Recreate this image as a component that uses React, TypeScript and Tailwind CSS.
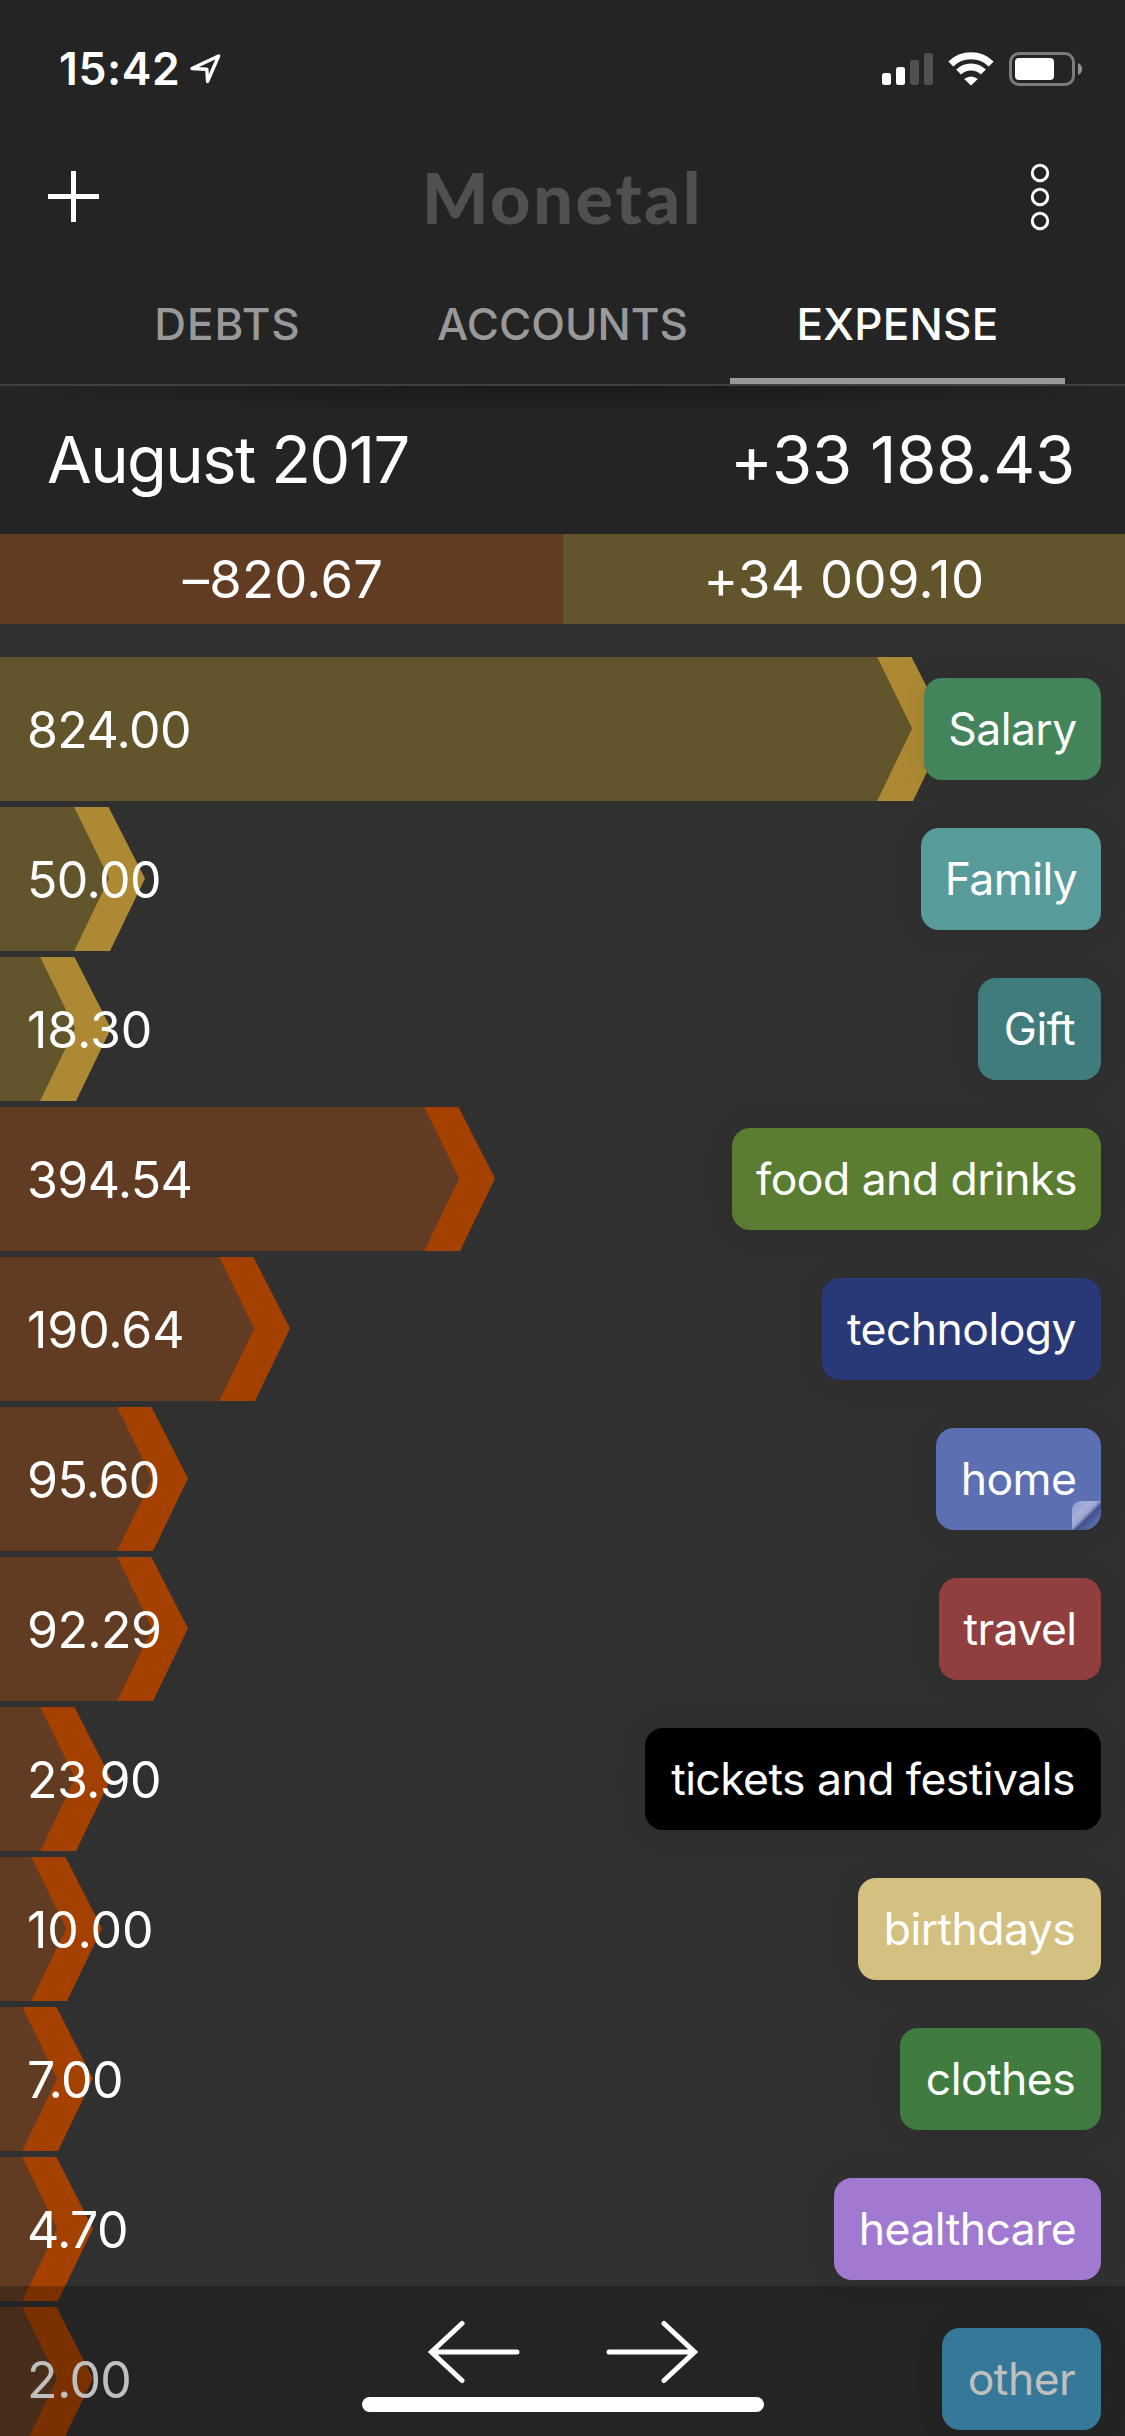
import clsx from "clsx";

type Row = {
  amount: string;
  label: string;
  bar: number;
  kind: "income" | "expense";
  tag: string;
  note?: boolean;
};

const rows: Row[] = [
  { amount: "824.00", label: "Salary", bar: 877, kind: "income", tag: "w-[177px] bg-[#43845b]" },
  { amount: "50.00", label: "Family", bar: 74, kind: "income", tag: "w-[180px] bg-[#589b9b]" },
  { amount: "18.30", label: "Gift", bar: 40, kind: "income", tag: "w-[123px] bg-[#407c7c]" },
  { amount: "394.54", label: "food and drinks", bar: 424, kind: "expense", tag: "w-[369px] bg-[#5b7d31]" },
  { amount: "190.64", label: "technology", bar: 219, kind: "expense", tag: "w-[279px] bg-[#293877]" },
  { amount: "95.60", label: "home", bar: 117, kind: "expense", tag: "w-[165px] bg-[#5c6fb3]", note: true },
  { amount: "92.29", label: "travel", bar: 117, kind: "expense", tag: "w-[162px] bg-[#913e3e]" },
  { amount: "23.90", label: "tickets and festivals", bar: 40, kind: "expense", tag: "w-[456px] bg-black" },
  { amount: "10.00", label: "birthdays", bar: 31, kind: "expense", tag: "w-[243px] bg-[#d4c080]" },
  { amount: "7.00", label: "clothes", bar: 22, kind: "expense", tag: "w-[201px] bg-[#407c40]" },
  { amount: "4.70", label: "healthcare", bar: 22, kind: "expense", tag: "w-[267px] bg-[#a179d1]" },
  { amount: "2.00", label: "other", bar: 22, kind: "expense", tag: "w-[159px] bg-[#49a0ca]" },
];

const tabs = [
  { name: "DEBTS", className: "tracking-[0.9px] border-transparent" },
  { name: "ACCOUNTS", className: "border-transparent" },
  { name: "EXPENSE", className: "tracking-[0.2px] border-[#999] text-white" },
];

function StatusBar() {
  return (
    <div className="flex h-[138px] items-start justify-between pl-[59px] pr-[42px] pt-[42px]">
      <div className="flex items-start">
        <span className="w-[131px] text-[44.5px] font-semibold leading-[54px] tracking-[0.6px]">15:42</span>
        <svg className="mt-[11px]" width="32" height="32" viewBox="0 0 32 32" fill="none" stroke="white" strokeWidth="3.4" strokeLinejoin="round">
          <path d="M2 15.5 28.6 3 17.6 28.4 16.8 16.2Z" />
        </svg>
      </div>
      <div className="flex items-start pt-[10px]">
        <svg width="52" height="34" viewBox="0 0 52 34" fill="white">
          <rect x="0" y="21" width="9" height="12" rx="2.5" />
          <rect x="14" y="15" width="9" height="18" rx="2.5" />
          <rect x="28" y="8" width="9" height="25" rx="2.5" fill="#505050" />
          <rect x="42" y="1" width="9" height="32" rx="2.5" fill="#505050" />
        </svg>
        <svg className="ml-[14px]" width="47" height="34" viewBox="0 0 47 34" fill="none" stroke="white">
          <path d="M2.8 12A29 29 0 0 1 43.2 12" strokeWidth="7" />
          <path d="M10.6 20A17.6 17.6 0 0 1 35.4 20" strokeWidth="7" />
          <path d="M16.2 27A10.5 10.5 0 0 1 29.8 27L23 33.6Z" fill="white" stroke="none" />
        </svg>
        <svg className="ml-[14px]" width="74" height="34" viewBox="0 0 74 34" fill="none">
          <rect x="1.5" y="1.5" width="63" height="31" rx="8.5" stroke="#7c7c7c" strokeWidth="3" />
          <rect x="6" y="6" width="39" height="22" rx="4" fill="white" />
          <path d="M69 11c5.4 1.5 5.4 10.5 0 12Z" fill="#909090" />
        </svg>
      </div>
    </div>
  );
}

function Tabs() {
  return (
    <div className="flex h-[129px] px-[60px] text-[44px] font-medium leading-[54px] text-[#999]">
      {tabs.map((tab) => (
        <div key={tab.name} className={clsx("flex w-[335px] justify-center border-b-[6px] pt-[42px]", tab.className)}>
          {tab.name}
        </div>
      ))}
    </div>
  );
}

function Bar({ width, kind }: { width: number; kind: Row["kind"] }) {
  const income = kind === "income";
  return (
    <div className="col-start-1 row-start-1 flex h-36">
      <div className={income ? "bg-[#62542b]" : "bg-[#613c23]"} style={{ width }} />
      <svg width="72" height="144" viewBox="0 0 72 144">
        <path d="M0 0 35 71.5 0 144Z" fill={income ? "#62542b" : "#613c23"} />
        <path d="M0 0H34.5L71 71.5 36 144H0L35 71.5Z" fill={income ? "#ac8932" : "#a44100"} />
      </svg>
    </div>
  );
}

export default function App() {
  return (
    <div className="relative h-[2436px] w-[1125px] overflow-hidden bg-[#303030] font-[Inter,sans-serif] text-white">
      <header className="bg-[#242424]">
        <StatusBar />
        <div className="flex h-[117px] items-center justify-between pl-12 pr-[75px]">
          <svg width="52" height="52" viewBox="0 0 52 52" stroke="white" strokeWidth="5">
            <path d="M25.5 0V51M0 25.5H51" />
          </svg>
          <span className="w-[286px] font-[Lato,sans-serif] text-[70px] font-black leading-[84px] tracking-[2.6px] text-[#505050]">Monetal</span>
          <svg width="20" height="70" viewBox="0 0 20 70" fill="none" stroke="white" strokeWidth="3">
            <circle cx="10" cy="11" r="7.7" />
            <circle cx="10" cy="35" r="7.7" />
            <circle cx="10" cy="59" r="7.7" />
          </svg>
        </div>
        <Tabs />
        <div className="flex h-[150px] items-center justify-between border-t-2 border-[#404040] bg-[radial-gradient(ellipse_50%_28px_at_50%_0,#191919,#242424)] pl-[47px] pr-[50px] text-[65px]">
          <span className="tracking-[-1.6px]">August 2017</span>
          <span className="tracking-[-0.2px]">+33 188.43</span>
        </div>
      </header>

      <div className="flex h-[90px] items-center text-center text-[52.5px] leading-[91px] tracking-[0.3px]">
        <div className="h-full w-[563px] bg-[#613c23] pl-[3px]">–820.67</div>
        <div className="h-full flex-1 bg-[#62542b]">+34 009.10</div>
      </div>

      <div className="flex flex-col gap-1.5 pt-[33px]">
        {rows.map((row) => (
          <div key={row.label} className="grid h-36 shrink-0 grid-cols-1">
            <Bar width={row.bar} kind={row.kind} />
            <div className="z-10 col-start-1 row-start-1 flex items-center justify-between pl-[27px] pr-6">
              <span
                className={clsx(
                  "pt-[2px] text-[50px] leading-none",
                  row.amount.startsWith("1") ? "tracking-[-0.1px]" : "tracking-[-0.6px]"
                )}
              >
                {row.amount}
              </span>
              <div
                className={clsx(
                  "relative flex h-[102px] items-center justify-center whitespace-nowrap rounded-[18px] text-[44.5px] tracking-[-0.55px] shadow-[0_0_32px_rgba(0,0,0,0.07)]",
                  row.tag
                )}
              >
                {row.label}
                {row.note && (
                  <span className="absolute bottom-0 right-0 h-[29px] w-[29px] overflow-hidden rounded-br-[18px] rounded-tl-[9px] bg-[linear-gradient(135deg,#8e9bcc_0%,#a6b0d9_35%,#96a3d0_47%,#43528c_56%,#5c6fb3_82%)]" />
                )}
              </div>
            </div>
          </div>
        ))}
      </div>

      {/* month navigation, floats over the list */}
      <div className="absolute inset-x-0 bottom-0 z-20 flex h-[150px] flex-col items-center bg-black/25 pt-[34px]">
        <svg width="270" height="64" viewBox="0 0 270 64" fill="none" stroke="white" strokeWidth="5" strokeLinecap="round">
          <path d="M89 32H4M34 3.5 3.5 32 34 60.5" />
          <path d="M181 32h85M236 3.5 266.500 32 236 60.5" />
        </svg>
        <div className="mt-[13px] h-[15px] w-[402px] rounded-full bg-white" />
      </div>
    </div>
  );
}
